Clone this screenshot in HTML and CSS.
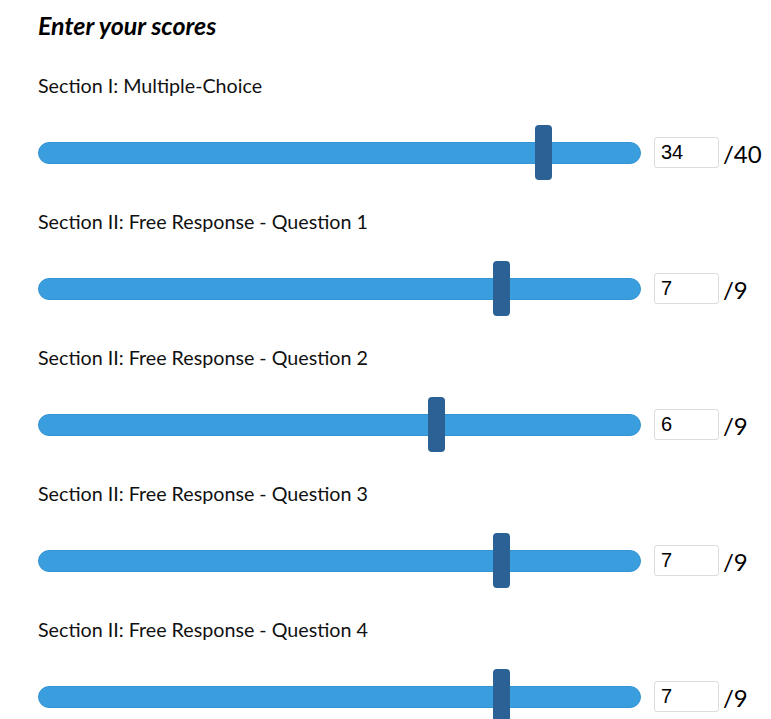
FILE: index.html
```html
<!DOCTYPE html>
<html>
<head>
<meta charset="utf-8">
<link rel="stylesheet" href="styles.css">
</head>
<body>
<div class="page">
  <h2 class="title">Enter your scores</h2>
  <div class="section">
    <div class="label">Section I: Multiple-Choice</div>
    <div class="row">
      <input class="slider" type="range" min="0" max="40" value="34">
      <input class="score" type="text" value="34">
      <span class="max">/40</span>
    </div>
  </div>
  <div class="section">
    <div class="label">Section II: Free Response - Question 1</div>
    <div class="row">
      <input class="slider" type="range" min="0" max="9" value="7">
      <input class="score" type="text" value="7">
      <span class="max">/9</span>
    </div>
  </div>
  <div class="section">
    <div class="label">Section II: Free Response - Question 2</div>
    <div class="row">
      <input class="slider" type="range" min="0" max="9" value="6">
      <input class="score" type="text" value="6">
      <span class="max">/9</span>
    </div>
  </div>
  <div class="section">
    <div class="label">Section II: Free Response - Question 3</div>
    <div class="row">
      <input class="slider" type="range" min="0" max="9" value="7">
      <input class="score" type="text" value="7">
      <span class="max">/9</span>
    </div>
  </div>
  <div class="section">
    <div class="label">Section II: Free Response - Question 4</div>
    <div class="row">
      <input class="slider" type="range" min="0" max="9" value="7">
      <input class="score" type="text" value="7">
      <span class="max">/9</span>
    </div>
  </div>
</div>
</body>
</html>
```
FILE: styles.css
```css
html, body {
  margin: 0;
  padding: 0;
  background: #ffffff;
}
body {
  font-family: Lato, "Liberation Sans", sans-serif;
  color: #111;
  overflow: hidden;
}
.page {
  padding: 10px 0 0 38px;
}
.title {
  margin: 0;
  font-size: 25px;
  line-height: 30px;
  font-weight: bold;
  font-style: italic;
  color: #000;
}
.section {
  display: flex;
  flex-direction: column;
}
.label {
  margin-top: 35px;
  font-size: 19.7px;
  line-height: 22px;
}
.section + .section .label {
  margin-top: 31px;
}
.row {
  display: flex;
  align-items: center;
  height: 55px;
  margin-top: 28px;
}
.slider {
  -webkit-appearance: none;
  appearance: none;
  margin: 0;
  padding: 0;
  width: 603px;
  height: 55px;
  background: transparent;
  outline: none;
}
.slider::-webkit-slider-runnable-track {
  height: 22px;
  box-sizing: border-box;
  background: #3a9ede;
  border: 1px solid #3593d2;
  border-radius: 11px;
}
.slider::-webkit-slider-thumb {
  -webkit-appearance: none;
  appearance: none;
  width: 17px;
  height: 55px;
  margin-top: -17.5px;
  background: #2b6195;
  border: none;
  border-radius: 4px;
}
.slider::-moz-range-track {
  height: 22px;
  box-sizing: border-box;
  background: #3a9ede;
  border: 1px solid #3593d2;
  border-radius: 11px;
}
.slider::-moz-range-thumb {
  width: 17px;
  height: 55px;
  background: #2b6195;
  border: none;
  border-radius: 4px;
}
.score {
  box-sizing: border-box;
  width: 65px;
  height: 31px;
  margin: 0 0 0 13px;
  padding: 0 6px;
  border: 1px solid #dcdcdc;
  border-radius: 3px;
  font-family: "Liberation Sans", Arial, sans-serif;
  font-size: 20px;
  color: #000;
  outline: none;
}
.max {
  margin-left: 4px;
  font-size: 24px;
  line-height: 31px;
  color: #000;
  padding-top: 1px;
}
```
